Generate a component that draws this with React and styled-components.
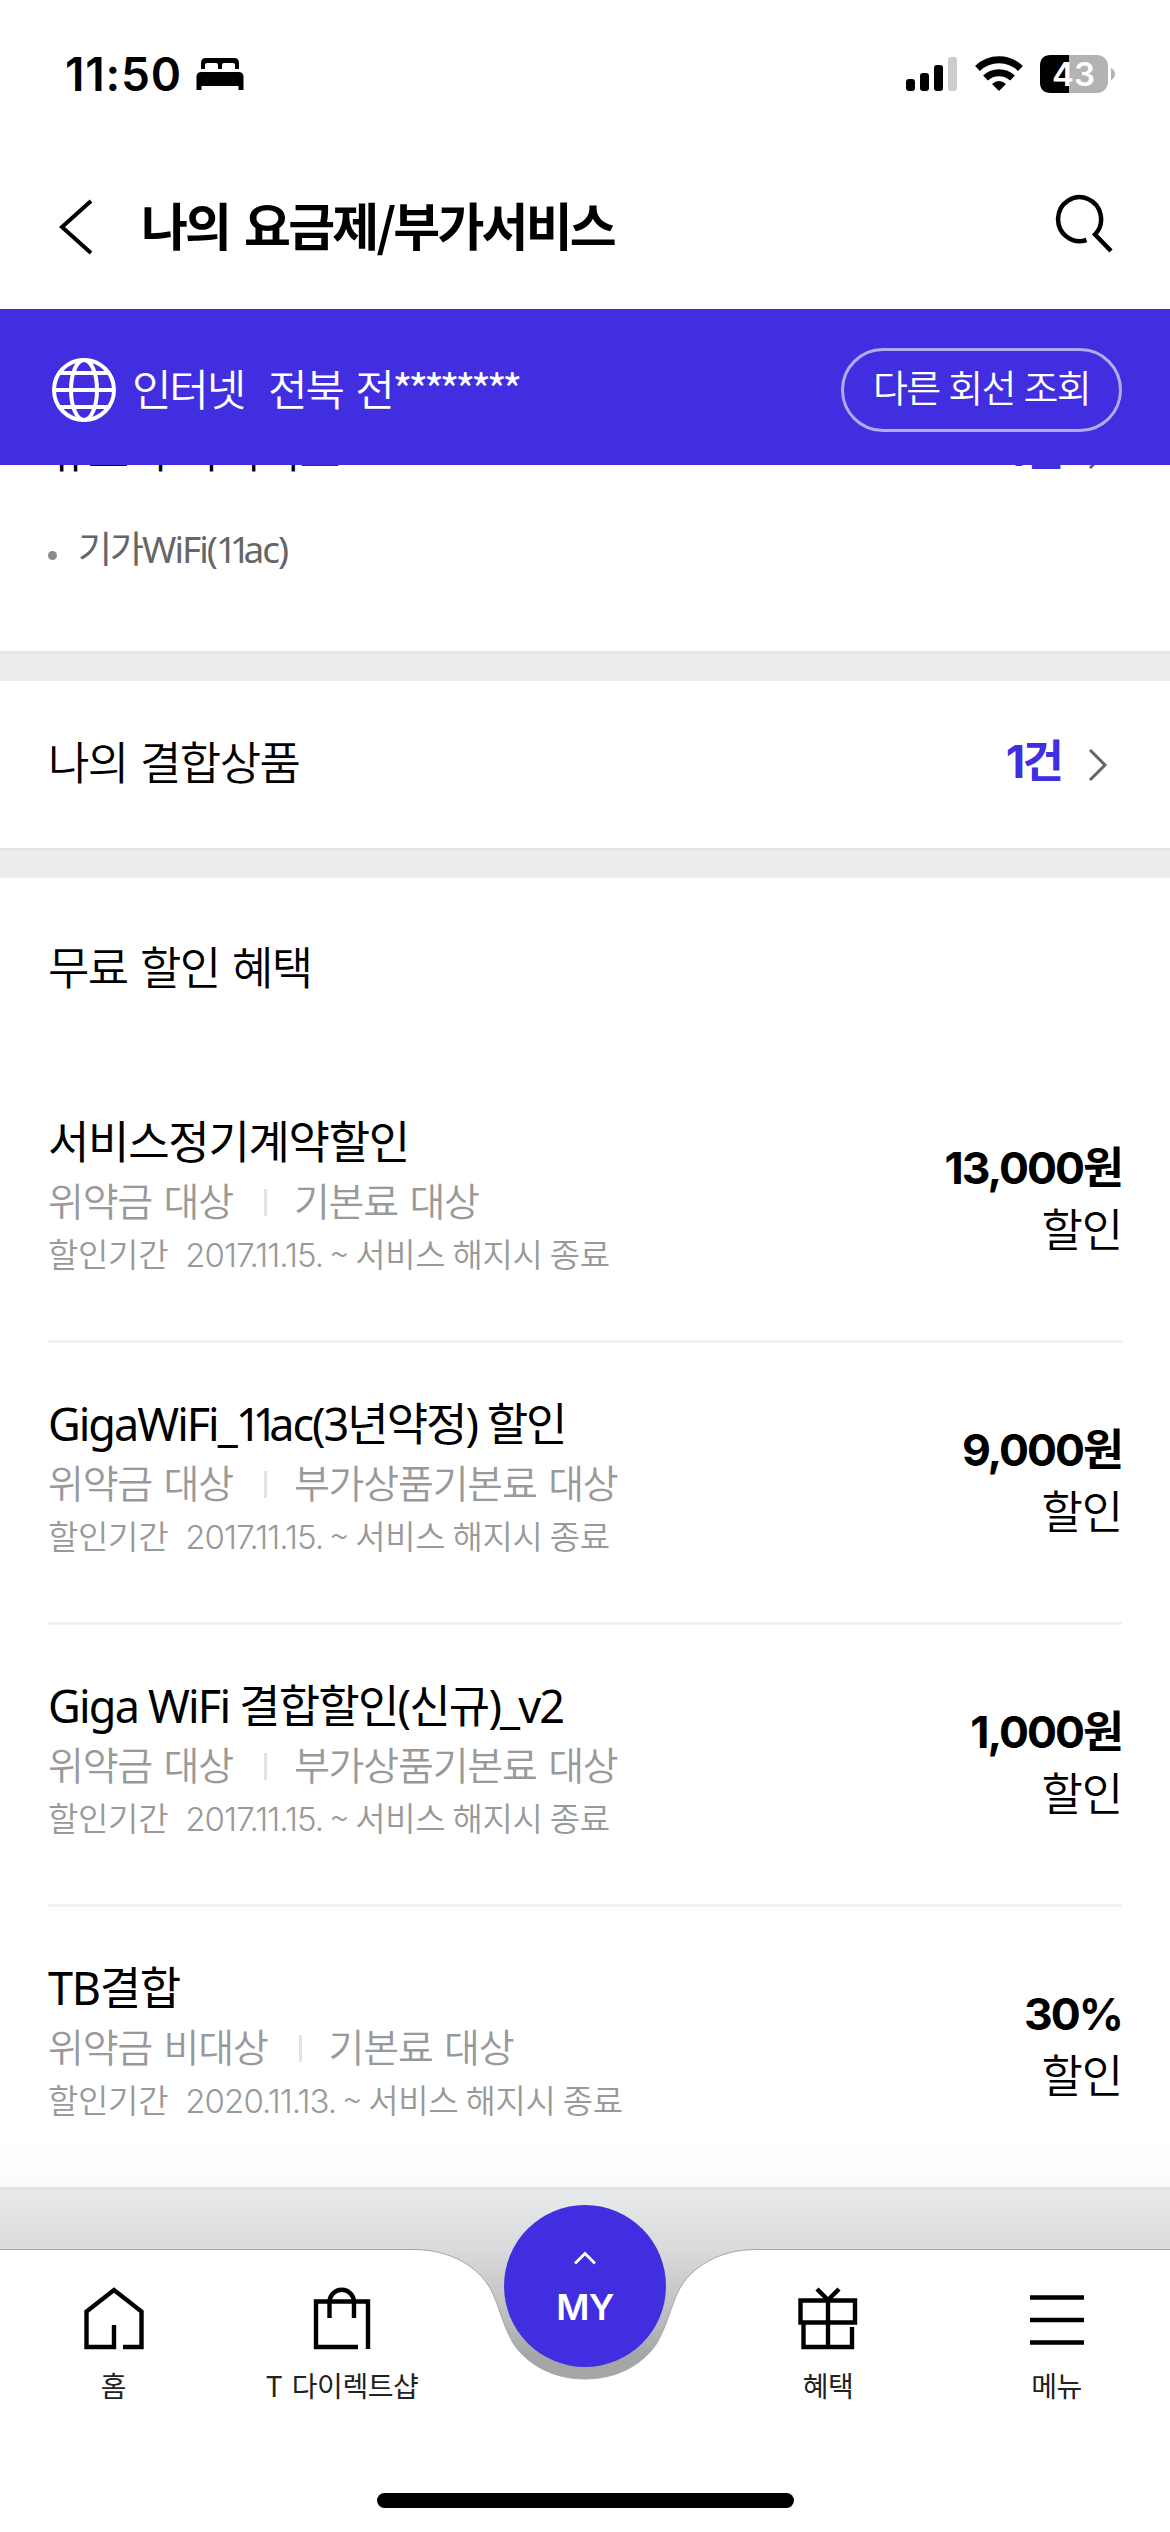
import React from "react";
import styled, { createGlobalStyle } from "styled-components";

const GlobalStyle = createGlobalStyle`
  * {
    box-sizing: border-box;
  }

  body {
    margin: 0;
    background: #ffffff;
    font-family: "Noto Sans CJK KR", sans-serif;
    color: #000000;
  }

  svg {
    display: block;
    flex-shrink: 0;
  }
`;

const Screen = styled.div`
  position: relative;
  width: 1170px;
  height: 2532px;
  overflow: hidden;
  display: flex;
  flex-direction: column;
  background: #ffffff;
  white-space: nowrap;
`;

const StatusBar = styled.div`
  height: 145px;
  padding: 2px 54px 0 65px;
  display: flex;
  align-items: center;
  justify-content: space-between;
`;

const StatusGroup = styled.div`
  display: flex;
  align-items: center;
  gap: ${(props) => props.$gap}px;
`;

const Clock = styled.span`
  font-family: Inter, sans-serif;
  font-size: 46px;
  font-weight: 600;
  line-height: 56px;
  letter-spacing: 0.8px;
`;

const Header = styled.header`
  height: 164px;
  padding: 0 53px 0 58px;
  display: flex;
  align-items: center;
`;

const HeaderTitle = styled.h1`
  flex: 1;
  margin: 0 0 0 47px;
  padding-bottom: 7px;
  font-size: 51px;
  font-weight: 700;
  line-height: 76px;
  letter-spacing: -2.8px;
  word-spacing: 6px;
`;

const LineBar = styled.div`
  height: 156px;
  padding: 6px 48px 0 50px;
  flex-shrink: 0;
  display: flex;
  align-items: center;
  background: #402ee0;
  color: #ffffff;
`;

const LineName = styled.span`
  margin-left: 14px;
  padding-bottom: 6px;
  font-size: 43px;
  font-weight: 350;
  letter-spacing: -2.2px;
`;

const LineAddress = styled(LineName)`
  flex: 1;
  margin-left: 24px;
  word-spacing: 5px;
`;

const Mask = styled.span`
  font-weight: 400;
  letter-spacing: -4.4px;
`;

const LineButton = styled.button`
  width: 281px;
  height: 84px;
  padding: 0 0 9px;
  border: 3px solid rgba(255, 255, 255, 0.6);
  border-radius: 42px;
  background: none;
  color: #ffffff;
  font-family: inherit;
  font-size: 38px;
  font-weight: 350;
  letter-spacing: -1.7px;
  word-spacing: 2px;
`;

const AddOnSection = styled.section`
  height: 186px;
  flex-shrink: 0;
  overflow: hidden;
  display: flex;
  flex-direction: column;
`;

const LinkRow = styled.div`
  height: ${(props) => props.$height}px;
  margin-top: ${(props) => props.$top || 0}px;
  padding: 0 62px 0 48px;
  flex-shrink: 0;
  display: flex;
  align-items: center;
`;

const RowTitle = styled.h2`
  flex: 1;
  margin: 0;
  padding-bottom: 8px;
  font-size: 45px;
  font-weight: 350;
  line-height: 64px;
  letter-spacing: -1.6px;
  word-spacing: 4px;
`;

const Count = styled.span`
  margin-right: 27px;
  padding-bottom: 6px;
  color: #402ee0;
  font-family: Inter, "Noto Sans CJK KR", sans-serif;
  font-size: 45px;
  font-weight: 700;
  line-height: 64px;
  letter-spacing: -2.8px;
`;

/* 1 has a full digit advance here, so pairs of it are pulled together */
const Ones = styled.span`
  letter-spacing: -0.2em;
`;

const AddOnItem = styled.p`
  height: 60px;
  margin: 32px 0 0;
  padding-left: 48px;
  display: flex;
  align-items: center;
  gap: 21px;
  color: #666666;
  font-family: "Noto Sans", "Noto Sans CJK KR", sans-serif;
  font-size: 37px;
  font-weight: 400;
  letter-spacing: -2px;

  &::before {
    content: "";
    width: 9px;
    height: 9px;
    margin-top: 16px;
    border-radius: 50%;
    background: #8c8c8c;
  }
`;

const Divider = styled.div`
  height: ${(props) => props.$height || 30}px;
  flex-shrink: 0;
  border-top: 3px solid #e2e4e5;
  background: #ecedee;
`;

const SectionTitle = styled(RowTitle)`
  flex: none;
  height: 183px;
  padding: 56px 48px 0;
`;

const DiscountList = styled.ul`
  margin: 0;
  padding: 0 48px;
  list-style: none;
`;

const DiscountItem = styled.li`
  height: 282px;
  padding-top: 50px;
  display: flex;
  justify-content: space-between;
  border-bottom: 3px solid #f2f2f2;

  &:last-child {
    height: 280px;
    border-bottom: 0;
  }
`;

const DiscountInfo = styled.div`
  display: flex;
  flex-direction: column;
`;

const DiscountName = styled.h3`
  margin: 0;
  font-family: "Noto Sans", "Noto Sans CJK KR", sans-serif;
  font-size: 45px;
  font-weight: 400;
  line-height: 61px;
  letter-spacing: ${(props) => props.$tracking || -1.3}px;
`;

const Terms = styled.div`
  display: flex;
  align-items: center;
  height: 54px;
  color: #999999;
  font-size: 39px;
  font-weight: 350;
  letter-spacing: -1.2px;
  word-spacing: 4px;
`;

const Separator = styled.i`
  width: 3px;
  height: 27px;
  margin: 6px 27px 0 31px;
  background: #e2e2e2;
`;

const Period = styled.div`
  display: flex;
  align-items: center;
  gap: 17px;
  height: 53px;
  color: #999999;
  font-size: 33px;
  font-weight: 350;
  letter-spacing: -0.3px;
`;

const StartDate = styled.span`
  font-family: Inter, sans-serif;
  letter-spacing: -0.9px;
`;

const Amount = styled.div`
  padding-top: 27px;
  display: flex;
  flex-direction: column;
  align-items: flex-end;
  font-size: 45px;
  font-weight: 350;
  line-height: 57px;
  letter-spacing: -1.2px;

  strong {
    font-family: Inter, "Noto Sans CJK KR", sans-serif;
    font-size: 44.5px;
    font-weight: 650;
    line-height: 61px;
    letter-spacing: -2px;
  }
`;

/* the tab bar floats over the scrolled content */
const TabBar = styled.nav`
  position: absolute;
  left: 0;
  right: 0;
  bottom: 0;
  height: 412px;
`;

const TabBarShape = styled.svg`
  position: absolute;
  inset: 0;
`;

const Tabs = styled.div`
  position: relative;
  height: 100%;
  padding-top: 167px;
  display: grid;
  grid-template-columns: 227px 230px 256px 230px 227px;
`;

const Tab = styled.div`
  display: flex;
  flex-direction: column;
  align-items: center;
  color: #222222;
  font-size: 28px;
  font-weight: 400;
  line-height: 40px;
  letter-spacing: -0.5px;
  word-spacing: 4px;

  svg {
    margin-bottom: 14px;
  }
`;

const MyButton = styled.button`
  width: 162px;
  height: 162px;
  margin: -82px auto 0;
  padding: 46px 0 0;
  border: 0;
  border-radius: 50%;
  display: flex;
  flex-direction: column;
  align-items: center;
  gap: 18px;
  background: #402ee0;
  color: #ffffff;
  font-family: Inter, sans-serif;
  font-size: 36px;
  font-weight: 600;
  line-height: 48px;
  letter-spacing: -0.8px;
`;

const HomeIndicator = styled.div`
  position: absolute;
  left: 377px;
  bottom: 24px;
  width: 417px;
  height: 15px;
  border-radius: 8px;
  background: #000000;
`;

const BedIcon = () => (
  <svg width="48" height="34" viewBox="0 0 48 34">
    <path d="M5 12V6q0-5 5-5h28q5 0 5 5v6h-4V8q0-2-2-2h-9q-2 0-2 2v4h-4V8q0-2-2-2h-9q-2 0-2 2v4z" />
    <path d="M0.500 33V20q0-5 5-5h37q5 0 5 5v13h-5v-4H5.500v4z" />
  </svg>
);

const SignalIcon = () => (
  <svg width="52" height="38" viewBox="0 0 52 38">
    <rect x="0" y="24" width="9" height="12" rx="3" />
    <rect x="14" y="18" width="9" height="18" rx="3" />
    <rect x="28" y="10" width="9" height="26" rx="3" />
    <rect x="42" y="2" width="9" height="34" rx="3" fill="#cccccc" />
  </svg>
);

const WifiIcon = () => (
  <svg width="50" height="38" viewBox="0 0 50 38">
    <g fill="none" stroke="#000" strokeWidth="7">
      <path d="M3.500 13.500A31 31 0 0 1 46.500 13.500" />
      <path d="M11.500 23A20 20 0 0 1 38.500 23" />
    </g>
    <path d="M25 36L18 29Q25 23 32 29z" />
  </svg>
);

const BatteryIcon = () => (
  <svg width="76" height="38" viewBox="0 0 76 38">
    <rect width="68" height="38" rx="11" fill="#b3b3b3" />
    <path d="M29 0H11Q0 0 0 11V27Q0 38 11 38H29z" />
    <path d="M71 13Q75 15 75 19Q75 23 71 25z" fill="#b3b3b3" />
    <text
      x="33.500"
      y="31"
      textAnchor="middle"
      fill="#fff"
      fontFamily="Inter, sans-serif"
      fontSize="33"
      fontWeight="600"
    >
      43
    </text>
  </svg>
);

const BackIcon = () => (
  <svg width="36" height="56" viewBox="0 0 36 56" fill="none" stroke="#000" strokeWidth="4">
    <path d="M33 2L4 28L33 54" />
  </svg>
);

const SearchIcon = () => (
  <svg width="62" height="68" viewBox="0 0 62 68" fill="none" stroke="#000" strokeWidth="4.500">
    <path d="M31.500 47A21.500 22 0 1 1 40 41.500L56 58" />
  </svg>
);

const GlobeIcon = () => (
  <svg width="68" height="68" viewBox="0 0 68 68" fill="none" stroke="#fff" strokeWidth="4">
    <circle cx="34" cy="34" r="30" />
    <ellipse cx="34" cy="34" rx="13" ry="30" />
    <path d="M4 34H64M8 17H60M8 51H60" />
  </svg>
);

const ChevronIcon = () => (
  <svg width="20" height="32" viewBox="0 0 20 32" fill="none" stroke="#666" strokeWidth="3">
    <path d="M2 1L17 16L2 31" />
  </svg>
);

const HomeIcon = () => (
  <svg width="60" height="64" viewBox="0 0 60 64" fill="none" stroke="#000" strokeWidth="4.400">
    <path d="M39 60H57.500V24.500L30 3L2.500 24.500V60H30V38" />
  </svg>
);

const BagIcon = () => (
  <svg width="58" height="64" viewBox="0 0 58 64" fill="none" stroke="#000" strokeWidth="4.400">
    <path d="M45 60H3V14.500H55V62" />
    <path d="M16.500 31V15A12 12 0 0 1 41 15V31" />
  </svg>
);

const GiftIcon = () => (
  <svg width="60" height="64" viewBox="0 0 60 64" fill="none" stroke="#000" strokeWidth="4.400">
    <path d="M2.500 13.500H57V35.500H2.500zM5.500 35.500V60H54V40M30 13.500V60M19 2L30 13L41 2" />
  </svg>
);

const MenuIcon = () => (
  <svg width="54" height="64" viewBox="0 0 54 64" stroke="#000" strokeWidth="4.400">
    <path d="M0 10.500H54M0 33H54M0 55.500H54" />
  </svg>
);

const UpIcon = () => (
  <svg width="24" height="14" viewBox="0 0 24 14" fill="none" stroke="#fff" strokeWidth="2.800">
    <path d="M2 12.500L12 2.500L22 12.500" />
  </svg>
);

const discounts = [
  {
    id: 1,
    name: "서비스정기계약할인",
    terms: ["위약금 대상", "기본료 대상"],
    start: "2017.11.15.",
    amount: "13,000원",
  },
  {
    id: 2,
    name: (
      <>
        GigaWiFi_<Ones>11</Ones>ac(3년약정) 할인
      </>
    ),
    tracking: -2,
    terms: ["위약금 대상", "부가상품기본료 대상"],
    start: "2017.11.15.",
    amount: "9,000원",
  },
  {
    id: 3,
    name: "Giga WiFi 결합할인(신규)_v2",
    tracking: -1.8,
    terms: ["위약금 대상", "부가상품기본료 대상"],
    start: "2017.11.15.",
    amount: "1,000원",
  },
  {
    id: 4,
    name: "TB결합",
    terms: ["위약금 비대상", "기본료 대상"],
    start: "2020.11.13.",
    amount: "30%",
  },
];

const App = () => {
  return (
    <>
      <GlobalStyle />
      <Screen>
        <StatusBar>
          <StatusGroup $gap={14}>
            <Clock>11:50</Clock>
            <BedIcon />
          </StatusGroup>
          <StatusGroup $gap={16}>
            <SignalIcon />
            <WifiIcon />
            <BatteryIcon />
          </StatusGroup>
        </StatusBar>

        <Header>
          <BackIcon />
          <HeaderTitle>나의 요금제/부가서비스</HeaderTitle>
          <SearchIcon />
        </Header>

        <LineBar>
          <GlobeIcon />
          <LineName>인터넷</LineName>
          <LineAddress>
            전북 전<Mask>********</Mask>
          </LineAddress>
          <LineButton>다른 회선 조회</LineButton>
        </LineBar>

        <AddOnSection>
          <LinkRow $height={64} $top={-44}>
            <RowTitle>유료 부가서비스</RowTitle>
            <Count>1건</Count>
            <ChevronIcon />
          </LinkRow>
          <AddOnItem>
            <span>
              기가WiFi(<Ones>11</Ones>ac)
            </span>
          </AddOnItem>
        </AddOnSection>

        <Divider />
        <LinkRow $height={167}>
          <RowTitle>나의 결합상품</RowTitle>
          <Count>1건</Count>
          <ChevronIcon />
        </LinkRow>
        <Divider />

        <SectionTitle>무료 할인 혜택</SectionTitle>
        <DiscountList>
          {discounts.map((item) => (
            <DiscountItem key={item.id}>
              <DiscountInfo>
                <DiscountName $tracking={item.tracking}>{item.name}</DiscountName>
                <Terms>
                  <span>{item.terms[0]}</span>
                  <Separator />
                  <span>{item.terms[1]}</span>
                </Terms>
                <Period>
                  <span>할인기간</span>
                  <span>
                    <StartDate>{item.start}</StartDate> ~ 서비스 해지시 종료
                  </span>
                </Period>
              </DiscountInfo>
              <Amount>
                <strong>{item.amount}</strong>
                <span>할인</span>
              </Amount>
            </DiscountItem>
          ))}
        </DiscountList>
        <Divider $height={200} />

        <TabBar>
          <TabBarShape width="1170" height="412" viewBox="0 2120 1170 412">
            <defs>
              <linearGradient id="shade" gradientUnits="userSpaceOnUse" x1="0" y1="2130" x2="0" y2="2380">
                <stop offset="0" stopColor="#000" stopOpacity="0" />
                <stop offset="0.240" stopColor="#000" stopOpacity="0.015" />
                <stop offset="0.480" stopColor="#000" stopOpacity="0.080" />
                <stop offset="0.760" stopColor="#000" stopOpacity="0.210" />
                <stop offset="0.900" stopColor="#000" stopOpacity="0.300" />
              </linearGradient>
            </defs>
            <rect y="2130" width="1170" height="402" fill="url(#shade)" />
            <path
              d="M0 2250H415C450 2250 479 2267 491 2290C500 2308 501 2321 513 2343C528 2366 555 2379 585 2379C615 2379 642 2366 657 2343C669 2321 670 2308 679 2290C691 2267 720 2250 755 2250H1170V2532H0z"
              fill="#fff"
            />
            <path
              d="M0 2249.500H415C450 2249.500 479 2267 491 2290C500 2308 501 2321 513 2343C528 2366 555 2379 585 2379C615 2379 642 2366 657 2343C669 2321 670 2308 679 2290C691 2267 720 2249.500 755 2249.500H1170"
              fill="none"
              stroke="#a6a8aa"
            />
          </TabBarShape>
          <Tabs>
            <Tab>
              <HomeIcon />
              홈
            </Tab>
            <Tab>
              <BagIcon />T 다이렉트샵
            </Tab>
            <MyButton>
              <UpIcon />
              MY
            </MyButton>
            <Tab>
              <GiftIcon />
              혜택
            </Tab>
            <Tab>
              <MenuIcon />
              메뉴
            </Tab>
          </Tabs>
          <HomeIndicator />
        </TabBar>
      </Screen>
    </>
  );
};

export default App;
